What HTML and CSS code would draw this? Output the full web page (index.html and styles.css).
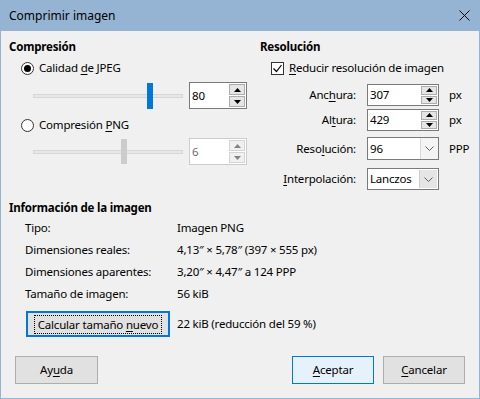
FILE: index.html
```html
<!DOCTYPE html>
<html lang="es">
<head>
<meta charset="utf-8">
<title>Comprimir imagen</title>
<link rel="stylesheet" href="styles.css">
</head>
<body>
<div class="window">
  <div class="titlebar">
    <span class="title">Comprimir imagen</span>
    <svg class="close" width="11" height="11" viewBox="0 0 11 11"><path d="M0.5 0.5L10.5 10.5M10.5 0.5L0.5 10.5" stroke="#000" stroke-width="1"/></svg>
  </div>
  <div class="content">
    <div class="top">
      <section class="col-left">
        <div class="heading">Compresión</div>
        <label class="opt opt1"><span class="radio checked"></span><span>Calidad <u>d</u>e JPEG</span></label>
        <div class="slider-row sr1">
          <div class="slider">
            <div class="track"></div>
            <div class="thumb" style="left:114px"></div>
          </div>
          <div class="spin big">
            <span class="val">80</span>
            <span class="spinbtns">
              <span class="sb"><svg width="7" height="4" viewBox="0 0 7 4"><path d="M3.5 0L7 4H0Z" fill="#000"/></svg></span>
              <span class="sb"><svg width="7" height="4" viewBox="0 0 7 4"><path d="M0 0H7L3.5 4Z" fill="#000"/></svg></span>
            </span>
          </div>
        </div>
        <label class="opt opt2"><span class="radio"></span><span>Compresión <u>P</u>NG</span></label>
        <div class="slider-row sr2 disabled">
          <div class="slider">
            <div class="track"></div>
            <div class="thumb" style="left:88px"></div>
          </div>
          <div class="spin big">
            <span class="val">6</span>
            <span class="spinbtns">
              <span class="sb"><svg width="7" height="4" viewBox="0 0 7 4"><path d="M3.5 0L7 4H0Z" fill="#838383"/></svg></span>
              <span class="sb"><svg width="7" height="4" viewBox="0 0 7 4"><path d="M0 0H7L3.5 4Z" fill="#838383"/></svg></span>
            </span>
          </div>
        </div>
      </section>
      <section class="col-right">
        <div class="heading">Resolución</div>
        <label class="opt chk"><span class="checkbox"><svg width="11" height="11" viewBox="0 0 11 11"><path d="M1.5 5.5L4.5 8.5L9.5 2" fill="none" stroke="#000" stroke-width="1.2"/></svg></span><span><u>R</u>educir resolución de imagen</span></label>
        <div class="form">
          <div class="frow f1">
            <span class="flabel">Anc<u>h</u>ura:</span>
            <div class="spin small">
              <span class="val">307</span>
              <span class="spinbtns">
                <span class="sb"><svg width="7" height="4" viewBox="0 0 7 4"><path d="M3.5 0L7 4H0Z" fill="#000"/></svg></span>
                <span class="sb"><svg width="7" height="4" viewBox="0 0 7 4"><path d="M0 0H7L3.5 4Z" fill="#000"/></svg></span>
              </span>
            </div>
            <span class="unit">px</span>
          </div>
          <div class="frow f2">
            <span class="flabel">Al<u>t</u>ura:</span>
            <div class="spin small">
              <span class="val">429</span>
              <span class="spinbtns">
                <span class="sb"><svg width="7" height="4" viewBox="0 0 7 4"><path d="M3.5 0L7 4H0Z" fill="#000"/></svg></span>
                <span class="sb"><svg width="7" height="4" viewBox="0 0 7 4"><path d="M0 0H7L3.5 4Z" fill="#000"/></svg></span>
              </span>
            </div>
            <span class="unit">px</span>
          </div>
          <div class="frow f3">
            <span class="flabel">Reso<u>l</u>ución:</span>
            <div class="combo">
              <span class="val">96</span>
              <span class="arrow"><svg width="9" height="5" viewBox="0 0 9 5"><path d="M0.5 0.5L4.5 4.5L8.5 0.5" fill="none" stroke="#606060" stroke-width="1"/></svg></span>
            </div>
            <span class="unit">PPP</span>
          </div>
          <div class="frow f4">
            <span class="flabel"><u>I</u>nterpolación:</span>
            <div class="combo list">
              <span class="val">Lanczos</span>
              <span class="arrow"><svg width="9" height="5" viewBox="0 0 9 5"><path d="M0.5 0.5L4.5 4.5L8.5 0.5" fill="none" stroke="#606060" stroke-width="1"/></svg></span>
            </div>
            <span class="unit"></span>
          </div>
        </div>
      </section>
    </div>

    <section class="info">
      <div class="heading">Información de la imagen</div>
      <div class="info-grid">
        <span>Tipo:</span><span>Imagen PNG</span>
        <span>Dimensiones reales:</span><span>4,13″ × 5,78″ (397 × 555 px)</span>
        <span>Dimensiones aparentes:</span><span>3,20″ × 4,47″ a 124 PPP</span>
        <span>Tamaño de imagen:</span><span>56 kiB</span>
      </div>
      <div class="calc-row">
        <button class="btn focus"><span class="focus-ring">Calcular tamaño <u>n</u>uevo</span></button>
        <span class="calc-val">22 kiB (reducción del 59 %)</span>
      </div>
    </section>

    <div class="buttons">
      <button class="btn dlg">Ay<u>u</u>da</button>
      <span class="spacer"></span>
      <button class="btn dlg default"><u>A</u>ceptar</button>
      <button class="btn dlg"><u>C</u>ancelar</button>
    </div>
  </div>
</div>
</body>
</html>
```

FILE: styles.css
```css
* { box-sizing: border-box; margin: 0; padding: 0; }
html, body { margin: 0; background: #f0f0f0; }
body {
  font-family: "Noto Sans", "Open Sans", sans-serif;
  font-size: 11.5px;
  letter-spacing: -0.2px;
  line-height: 16px;
  color: #000;
}
u { text-decoration: underline; text-underline-offset: 2px; text-decoration-thickness: 1px; }

.window {
  width: 480px;
  height: 399px;
  border: 1px solid #95b3d3;
  border-top: 0;
  background: #f0f0f0;
  display: flex;
  flex-direction: column;
}
.titlebar {
  height: 31px;
  margin: 0 -1px;
  background: #95b3d3;
  display: flex;
  align-items: center;
  justify-content: space-between;
  padding: 0 10px 0 9px;
}
.title { font-size: 12px; letter-spacing: 0; }
.close { display: block; }

.content {
  flex: 1;
  display: flex;
  flex-direction: column;
  padding: 0 14px 14px 8px;
}
.top {
  display: grid;
  grid-template-columns: 238px 1fr;
  column-gap: 13px;
  align-items: start;
}
.heading { font-weight: 700; height: 16px; margin-top: 8px; }

.opt { display: flex; align-items: center; gap: 5px; height: 16px; }
.opt1 { margin-top: 5px; padding-left: 12px; }
.opt2 { margin-top: 8px; padding-left: 12px; }
.chk { margin-top: 5px; padding-left: 11px; }

.radio {
  width: 13px; height: 13px;
  border: 1px solid #333;
  border-radius: 50%;
  background: #fff;
  display: flex; align-items: center; justify-content: center;
}
.radio.checked::after {
  content: "";
  width: 7px; height: 7px;
  border-radius: 50%;
  background: #000;
}
.checkbox {
  width: 13px; height: 13px;
  border: 1px solid #333;
  background: #fff;
  display: flex; align-items: center; justify-content: center;
}
.checkbox svg { display: block; }

.slider-row { display: flex; align-items: center; gap: 6px; padding-left: 24px; height: 27px; }
.sr1 { margin-top: 6px; }
.sr2 { margin-top: 5px; }
.slider { position: relative; width: 150px; height: 27px; }
.track {
  position: absolute; left: 0; right: 0; top: 12px;
  height: 4px;
  background: #e7e7e7;
  border: 1px solid #d6d6d6;
}
.thumb {
  position: absolute; top: 1px;
  width: 6px; height: 26px;
  background: #0078d7;
}
.disabled .thumb { background: #cccccc; top: 1px; height: 25px; }

.spin {
  display: flex;
  background: #fff;
  border: 1px solid #7a7a7a;
}
.spin .val { flex: 1; align-self: center; padding-left: 2px; }
.spin.big { width: 58px; height: 27px; }
.spin.small { width: 72px; height: 22px; }
.disabled .spin { border-color: #cccccc; }
.disabled .spin .val { color: #6d6d6d; }
.spinbtns {
  width: 17px;
  display: flex; flex-direction: column;
  padding: 1px 1px 1px 0;
  gap: 1px;
}
.sb {
  flex: 1;
  background: #e5e5e5;
  border: 1px solid #adadad;
  display: flex; align-items: center; justify-content: center;
}
.sb svg { display: block; }
.disabled .sb { background: #f0f0f0; border-color: #d4d4d4; }

.form { display: flex; flex-direction: column; }
.frow {
  display: grid;
  grid-template-columns: 96px 72px 1fr;
  column-gap: 10px;
  align-items: center;
}
.frow .spin, .frow .combo { margin-left: 1px; }
.flabel { text-align: right; }
.unit { padding-left: 1px; }
.f1 { margin-top: 8px; height: 22px; }
.f2 { margin-top: 3px; height: 22px; }
.f3 { margin-top: 6px; height: 23px; }
.f4 { margin-top: 8px; height: 22px; }

.combo {
  display: flex;
  width: 72px; height: 100%;
  background: #fff;
  border: 1px solid #7a7a7a;
}
.combo .val { flex: 1; align-self: center; padding-left: 2px; }
.combo .arrow {
  width: 18px;
  border-left: 1px solid #dadada;
  background: #f4f4f4;
  display: flex; align-items: center; justify-content: center;
}
.combo.list .arrow { background: #e5e5e5; border-left-color: #cccccc; margin: 1px 1px 1px 0; }

.info { margin-top: 1px; }
.info .heading { margin-top: 9px; }
.info-grid {
  display: grid;
  grid-template-columns: 152px 1fr;
  row-gap: 6px;
  padding-left: 16px;
  margin-top: 4px;
}
.calc-row {
  display: flex; align-items: center; gap: 7px;
  margin-top: 9px;
  padding-left: 17px;
}
.btn {
  font: inherit;
  letter-spacing: inherit;
  color: #000;
  background: #e1e1e1;
  border: 1px solid #adadad;
  display: flex; align-items: center; justify-content: center;
}
.btn.focus {
  width: 144px; height: 26px;
  border: 2px solid #0078d7;
}
.focus-ring { outline: 1px dotted #000; outline-offset: 1px; padding: 0 2px; line-height: 15px; }

.buttons {
  margin-top: auto;
  display: flex;
  gap: 9px;
  padding-left: 6px;
}
.spacer { flex: 1; }
.btn.dlg { width: 82px; height: 28px; }
.btn.dlg:first-child { width: 83px; }
.btn.default { background: #e5f1fb; border-color: #0078d7; }
```
